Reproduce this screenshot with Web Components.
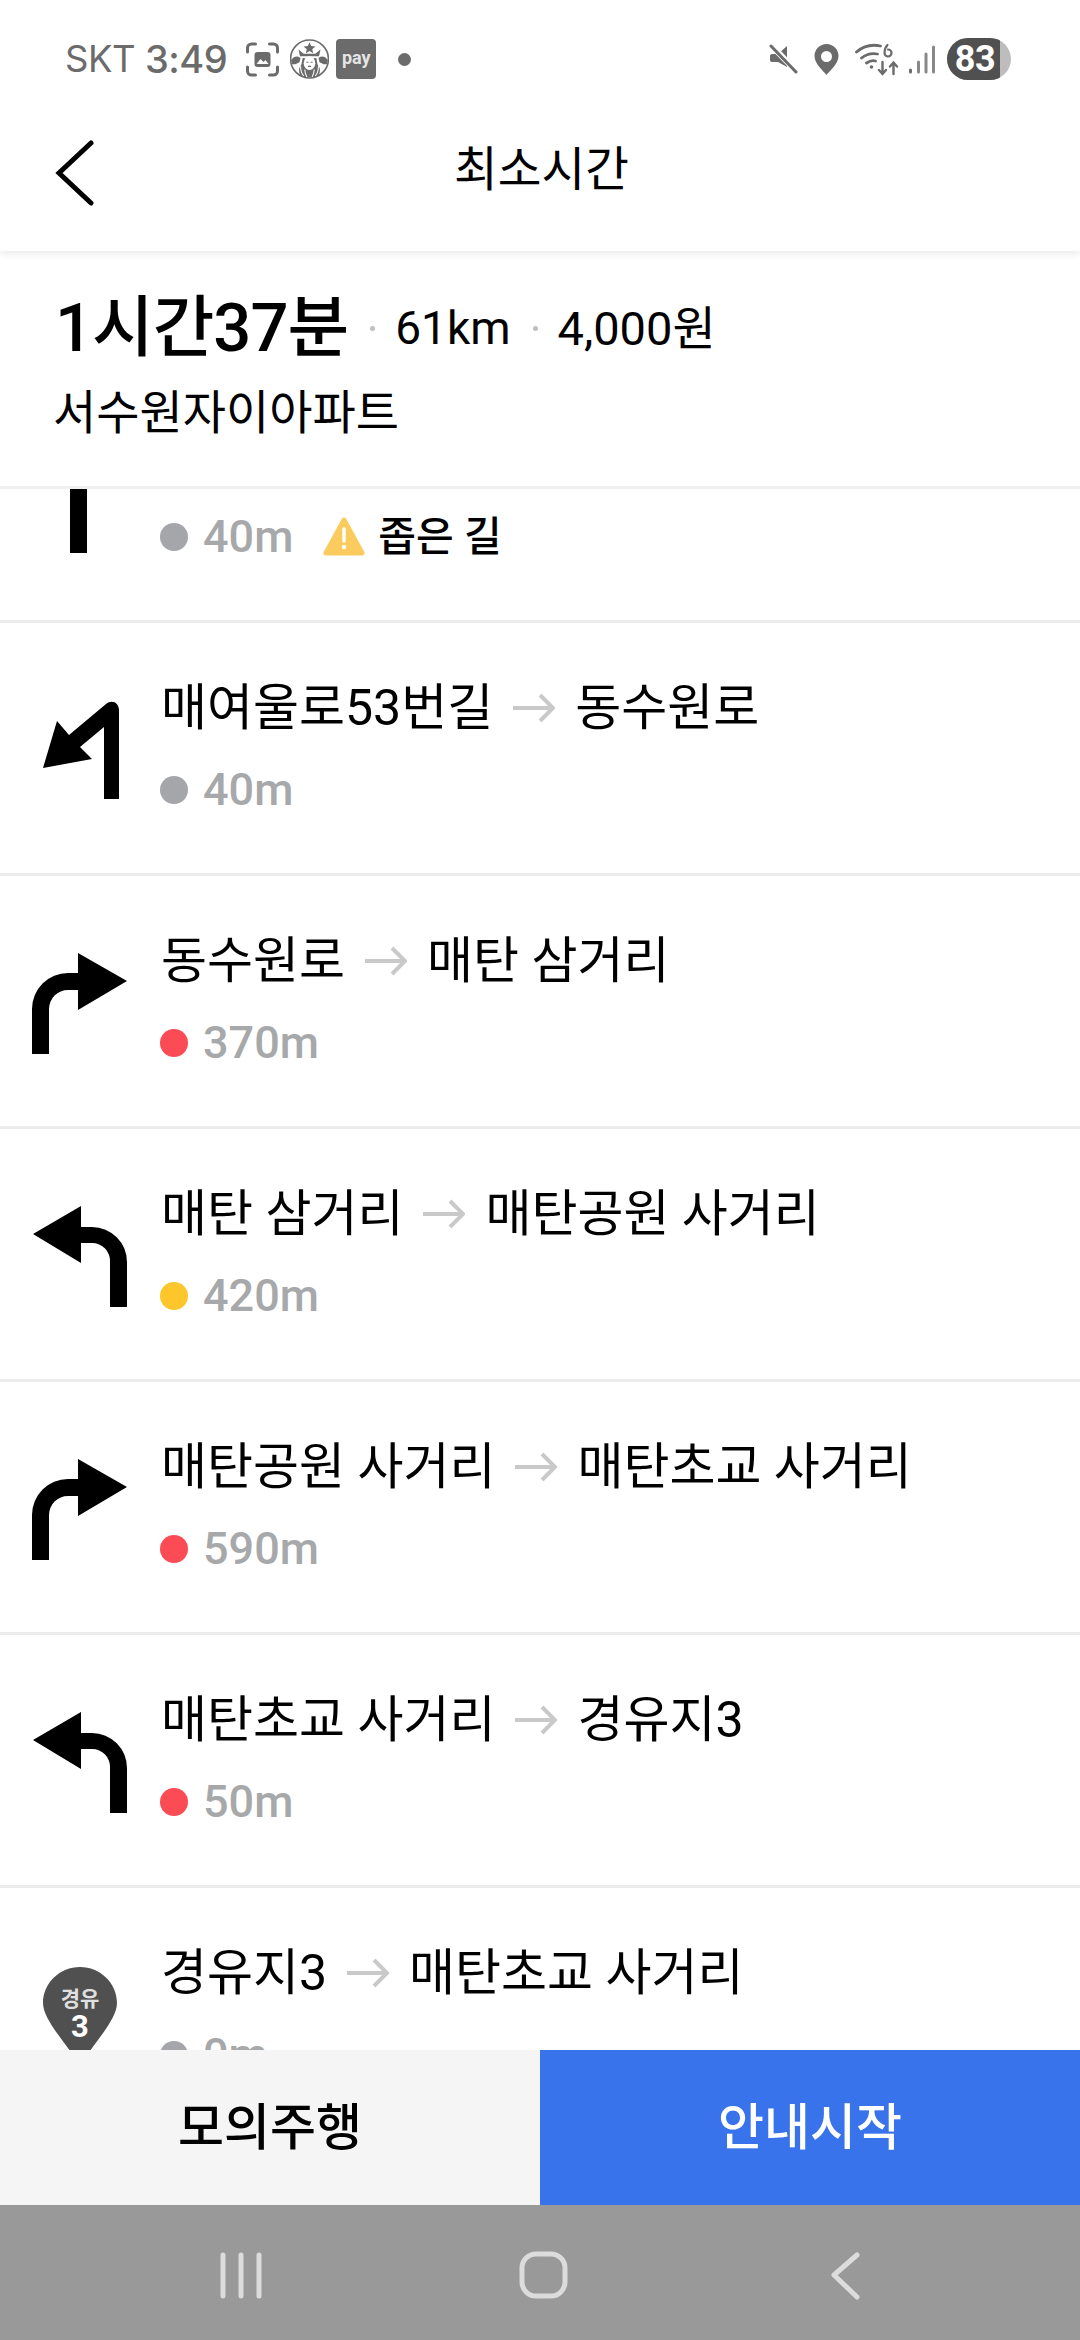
<!DOCTYPE html>
<html lang="ko"><head><meta charset="utf-8"><title>최소시간</title>
<style>
html,body{margin:0;padding:0;background:#fff}
body{font-family:Roboto,"Noto Sans CJK KR",sans-serif;color:#000;width:1080px;height:2340px;overflow:hidden}
</style></head><body>
<route-app>
  <status-bar slot="status"></status-bar>
  <nav-header slot="header">최소시간</nav-header>
  <route-summary slot="summary" time="1시간37분" dist="61km" fare="4,000원">서수원자이아파트</route-summary>
  <route-row slot="list" color="#a5a6aa" dist="40m" warn="좁은 길"><turn-icon slot="icon" kind="straight"></turn-icon></route-row>
  <route-row slot="list" color="#a5a6aa" dist="40m"><turn-icon slot="icon" kind="uturn"></turn-icon><span slot="from">매여울로53번길</span><span slot="to">동수원로</span></route-row>
  <route-row slot="list" color="#fb4c55" dist="370m"><turn-icon slot="icon" kind="right"></turn-icon><span slot="from">동수원로</span><span slot="to">매탄 삼거리</span></route-row>
  <route-row slot="list" color="#fdc62b" dist="420m"><turn-icon slot="icon" kind="left"></turn-icon><span slot="from">매탄 삼거리</span><span slot="to">매탄공원 사거리</span></route-row>
  <route-row slot="list" color="#fb4c55" dist="590m"><turn-icon slot="icon" kind="right"></turn-icon><span slot="from">매탄공원 사거리</span><span slot="to">매탄초교 사거리</span></route-row>
  <route-row slot="list" color="#fb4c55" dist="50m"><turn-icon slot="icon" kind="left"></turn-icon><span slot="from">매탄초교 사거리</span><span slot="to">경유지3</span></route-row>
  <route-row slot="list" color="#a5a6aa" dist="0m"><turn-icon slot="icon" kind="pin"></turn-icon><span slot="from">경유지3</span><span slot="to">매탄초교 사거리</span></route-row>
  <bottom-actions slot="actions"></bottom-actions>
  <system-nav slot="sysnav"></system-nav>
</route-app>
<script>
const def=(name,html)=>{
  customElements.define(name,class extends HTMLElement{
    constructor(){super();this.attachShadow({mode:'open'});}
    connectedCallback(){this.shadowRoot.innerHTML=typeof html==='function'?html(this):html;}
  });
};
def('route-app',`<style>
:host{display:flex;flex-direction:column;width:1080px;height:2340px;background:#fff;position:relative}
.list{flex:1;min-height:0;overflow:hidden}
.scroller{margin-top:-119px;display:flex;flex-direction:column}
.top{position:relative;z-index:2;background:#fff;box-shadow:0 2px 9px rgba(0,0,0,.1)}
.sum{position:relative;z-index:1}
.foot{flex:none}
</style>
<div class="top"><slot name="status"></slot><slot name="header"></slot></div>
<div class="sum"><slot name="summary"></slot></div>
<div class="list"><div class="scroller"><slot name="list"></slot></div></div>
<div class="foot"><slot name="actions"></slot><slot name="sysnav"></slot></div>`);

def('status-bar',`<style>
:host{display:flex;align-items:center;height:110px;padding:8px 69px 0 65px;box-sizing:border-box;color:#6b6b6b;font-family:Inter,Roboto,sans-serif}
.t{font-size:36.500px;letter-spacing:-.5px;line-height:1}
.clock{font-weight:500;font-size:38px;margin-left:10px;margin-right:18px}
svg{display:block;flex:none}
.pay{width:40px;height:40px;border-radius:4px;background:#6b6b6b;color:#e4e4e4;font:700 18px Roboto,sans-serif;display:flex;align-items:center;justify-content:center;margin:0 0 0 7px;padding-bottom:3px;box-sizing:border-box}
.dot{width:13px;height:13px;border-radius:50%;background:#6b6b6b;margin-left:22px}
.sp{flex:1}
.bat{position:relative;width:64px;height:42px;border-radius:21px;overflow:hidden;background:#bdbdbd;margin-left:11px}
.bat i{position:absolute;left:0;top:0;bottom:0;width:53px;background:#505050}
.bat b{position:absolute;left:0;width:53px;padding-left:3px;box-sizing:border-box;top:0;bottom:0;display:flex;align-items:center;justify-content:center;color:#fff;font:700 36px Roboto,sans-serif;letter-spacing:-.5px}
</style>
<span class="t">SKT</span><span class="t clock">3:49</span>
<svg width="35" height="35" viewBox="0 0 34 35" fill="none" stroke="#6b6b6b" stroke-width="3" stroke-linecap="round"><path d="M2 10V6a4 4 0 0 1 4-4h4M24 2h4a4 4 0 0 1 4 4v4M32 25v4a4 4 0 0 1-4 4h-4M10 33H6a4 4 0 0 1-4-4v-4"/><rect x="9" y="10" width="16" height="15" rx="3" fill="#6b6b6b" stroke="none"/><path d="M11 22l4-5 3 3 2-2 3 4z" fill="#fff" stroke="none"/></svg>
<svg style="margin-left:10px" width="39" height="40" viewBox="0 0 37 38"><circle cx="18.500" cy="19" r="18" fill="#fff" stroke="#6b6b6b" stroke-width="1.500"/><path d="M18.500 3l1.600 3.700 4 .4-3 2.600.9 3.800-3.500-2-3.500 2 .9-3.800-3-2.600 4-.4z" fill="#6b6b6b"/><path d="M8 10l5 4h11l5-4-1.500 6.500h-18z" fill="#6b6b6b"/><path d="M1 20c3-4 6-4 9-2l-1 4-4 2H2zM36 20c-3-4-6-4-9-2l1 4 4 2h3z" fill="#6b6b6b"/><path d="M12 18c-1 5-1 7-3 9-1 3 0 7 2 9h15c2-2 3-6 2-9-2-2-2-4-3-9z" fill="#6b6b6b"/><ellipse cx="18.500" cy="23" rx="5.500" ry="6.500" fill="#fff"/><path d="M15.500 22h2M19.500 22h2M17 26h3" stroke="#6b6b6b" stroke-width="1"/><path d="M10 26c0 4 1 7 3 9M14 29c0 3 1 5 2 7M27 26c0 4-1 7-3 9M23 29c0 3-1 5-2 7" stroke="#fff" stroke-width="1" fill="none"/></svg>
<span class="pay">pay</span><span class="dot"></span><span class="sp"></span>
<svg width="29" height="30" viewBox="0 0 29 30"><path d="M3 10h6l9-8v21l-9-5H3a2 2 0 0 1-2-2v-4a2 2 0 0 1 2-2z" fill="#6b6b6b"/><path d="M2 1l26 27" stroke="#fff" stroke-width="6"/><path d="M2 2l25 26" stroke="#6b6b6b" stroke-width="3" stroke-linecap="round"/></svg>
<svg style="margin-left:16px" width="25" height="31" viewBox="0 0 25 31"><path fill-rule="evenodd" d="M12.500 0A12 12 0 0 0 .5 12c0 8 9 15 12 19 3-4 12-11 12-19A12 12 0 0 0 12.500 0zm0 7a5.500 5.500 0 1 1 0 11 5.500 5.500 0 0 1 0-11z" fill="#6b6b6b"/></svg>
<svg style="margin-left:16px" width="44" height="33" viewBox="0 0 43 33" fill="none" stroke="#6b6b6b" stroke-width="2.800" stroke-linecap="round"><path d="M1 9c7-6 15-8 24-6M6 15c5-4 11-5 16-4M11 20c3-2 6-3 9-2"/><circle cx="16" cy="24" r="1.800" fill="#6b6b6b" stroke="none"/><path d="M32 2c-3 3-3 6-3 8a3.500 3.500 0 1 0 3.500-3.500" stroke-width="2.200"/><path d="M27 19v11M23.500 27l3.500 4 3.500-4M38 31V20M34.500 23.500l3.500-4 3.500 4" stroke-width="2.400"/></svg>
<svg style="margin-left:9px" width="28" height="29" viewBox="0 0 27 29" stroke="#6b6b6b" stroke-width="3" stroke-linecap="round" fill="none"><path d="M2 25v2"/><path d="M10 17v10" stroke="#888"/><path d="M17.500 9v18" stroke="#888"/><path d="M25 2v25" stroke="#888"/></svg>
<span class="bat"><i></i><b>83</b></span>`);

def('nav-header',`<style>
:host{display:flex;align-items:center;justify-content:center;position:relative;height:141px;font-size:47.500px;line-height:1;padding:0 0 20px 3px;box-sizing:border-box}
button{all:unset;position:absolute;left:54px;top:30px;display:block}
svg{display:block}
</style>
<button aria-label="뒤로"><svg width="40" height="66" viewBox="0 0 40 66" fill="none" stroke="#000" stroke-width="5" stroke-linecap="round"><path d="M37 3L5 33 37 63"/></svg></button><slot></slot>`);

def('route-summary',el=>`<style>
:host{display:block;height:238px;box-sizing:border-box;border-bottom:3px solid #f0f0f0;padding:42px 0 0 55px;background:#fff}
.l1{display:flex;align-items:center;height:70px;white-space:nowrap}
.time{font-size:67px;font-weight:500;letter-spacing:-1px;line-height:1}
.v{font-size:46px;line-height:1;font-weight:400;margin-left:-2px}
.v.w{font-size:47px}
.dot{width:5px;height:5px;border-radius:50%;background:#bfbfbf;margin:0 22px;flex:none}
.l2{margin-top:24px;margin-left:-2px;font-size:47px;line-height:52px;white-space:nowrap}
</style>
<div class="l1"><span class="time">${el.getAttribute('time')}</span><span class="dot"></span><span class="v">${el.getAttribute('dist')}</span><span class="dot"></span><span class="v w">${el.getAttribute('fare')}</span></div>
<div class="l2"><slot></slot></div>`);

def('route-row',el=>{
 const w=el.getAttribute('warn');
 return `<style>
:host{display:flex;align-items:center;flex:none;height:253px;box-sizing:border-box;border-bottom:3px solid #ececec;background:#fff}
.ic{width:160px;flex:none;display:flex;align-items:center}
.body{flex:1;min-width:0;display:flex;flex-direction:column;gap:32px;padding-bottom:9px}
.name{display:flex;align-items:center;gap:20px;font-size:50px;line-height:60px;height:60px;white-space:nowrap;padding-left:1px}
.name svg{display:block;flex:none}
.meta{display:flex;align-items:center;height:40px;color:#a7a8aa;font-size:45px;font-weight:500}
.meta i{width:28px;height:28px;border-radius:50%;background:${el.getAttribute('color')};margin-right:15px;flex:none}
.warn{display:flex;align-items:center;margin-left:30px;color:#000;font-size:41px;font-weight:500}
.warn svg{margin-right:13px;display:block}
.warn span{padding-bottom:7px}
</style>
<div class="ic"><slot name="icon"></slot></div>
<div class="body">
 <div class="name"><slot name="from"></slot>${el.querySelector('[slot=to]')?`<svg width="42" height="30" viewBox="0 0 42 30" fill="none" stroke="#c9c9c9" stroke-width="4"><path d="M0 15h40M27 2l13 13-13 13"/></svg>`:''}<slot name="to"></slot></div>
 <div class="meta"><i></i>${el.getAttribute('dist')}${w?`<span class="warn"><svg width="42" height="39" viewBox="0 0 42 39"><path d="M21 3L39 36H3z" fill="#fbcb5e" stroke="#fbcb5e" stroke-width="5" stroke-linejoin="round"/><path d="M21 12v12" stroke="#fff" stroke-width="3.500" stroke-linecap="round"/><circle cx="21" cy="30" r="2.200" fill="#fff"/></svg><span>${w}</span></span>`:''}</div>
</div>`});

const turn={
 left:'<path d="M15 40L63 12V33H74A35 35 0 0 1 109 68V113H92V68A18 18 0 0 0 74 49H63V69Z"/>',
 right:'<path d="M109 40L60 12V32H50A36 36 0 0 0 14 68V113H31V68A19 19 0 0 1 50 49H60V69Z"/>',
 uturn:'<path d="M25 80L39 33 51 47 88 16C94 11 101 15 101 22V111H86V39L62 59 74 71Z"/>',
 straight:'<path d="M52 2H69V118H52Z"/>',
 pin:'<path d="M62 14C42 14 25 30 25 50 25 66 46 88 62 112 78 88 99 66 99 50 99 30 82 14 62 14Z" fill="#505050"/><text x="62" y="53" text-anchor="middle" fill="#e0e0e0" font-family="Noto Sans CJK KR" font-size="21" font-weight="700">경유</text><text x="62" y="84" text-anchor="middle" fill="#fff" font-family="Roboto" font-size="31" font-weight="700">3</text>'
};
def('turn-icon',el=>`<style>:host{display:block;margin-left:18px}svg{display:block;overflow:visible}</style><svg width="120" height="120" viewBox="0 0 120 120" fill="#000">${turn[el.getAttribute('kind')]}</svg>`);

def('bottom-actions',`<style>
:host{display:grid;grid-template-columns:540px 540px;height:155px;position:relative;font-size:50px;font-weight:500}
div{display:flex;align-items:center;justify-content:center;padding-bottom:9px;box-sizing:border-box}
.a{background:#f5f5f5;color:#000}.b{background:#3873ec;color:#fff}
</style><div class="a">모의주행</div><div class="b">안내시작</div>`);

def('system-nav',`<style>
:host{display:block;height:135px;background:#999}
svg{display:block}
</style><svg width="1080" height="135" viewBox="0 0 1080 135" fill="none" stroke="#dcdcdc" stroke-width="5" stroke-linecap="round" stroke-linejoin="round"><path d="M223 50V91M241 50V91M259 50V91"/><rect x="522" y="49" width="43" height="42" rx="14"/><path d="M857 50L834 70 857 92"/></svg>`);
</script>
</body></html>
